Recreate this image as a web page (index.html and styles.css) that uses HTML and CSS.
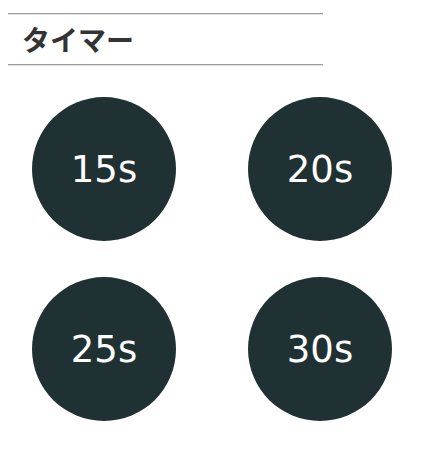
FILE: index.html
```html
<!DOCTYPE html>
<html lang="ja">
<head>
<meta charset="utf-8">
<title>タイマー</title>
<link rel="stylesheet" href="styles.css">
</head>
<body>
<header class="title-bar">
  <h1 class="title">タイマー</h1>
</header>
<main class="timers">
  <button class="timer">15s</button>
  <button class="timer">20s</button>
  <button class="timer">25s</button>
  <button class="timer">30s</button>
</main>
</body>
</html>
```
FILE: styles.css
```css
html, body {
  margin: 0;
  padding: 0;
  background: #ffffff;
}
body {
  padding: 13px 8px 8px;
  font-family: "DejaVu Sans", "Noto Sans CJK JP", sans-serif;
}
.title-bar {
  width: 315px;
  border-top: 1px solid #9a9a9a;
  border-bottom: 1px solid #9a9a9a;
  box-shadow: inset 0 1px 0 #e4e4e4, 0 1px 0 #e4e4e4;
  height: 52px;
  box-sizing: border-box;
  display: flex;
  align-items: center;
  padding-left: 14px;
}
.title {
  margin: 0;
  font-family: "Noto Sans CJK JP", sans-serif;
  font-weight: 700;
  font-size: 28px;
  line-height: 1;
  color: #333333;
}
.timers {
  display: grid;
  grid-template-columns: 144px 144px;
  column-gap: 72px;
  row-gap: 36px;
  padding: 32px 0 0 24px;
}
.timer {
  width: 144px;
  height: 144px;
  border-radius: 50%;
  border: none;
  padding: 0;
  background: #1f3133;
  color: #ffffff;
  font-family: "DejaVu Sans", sans-serif;
  font-size: 37px;
  display: flex;
  align-items: center;
  justify-content: center;
}
```
